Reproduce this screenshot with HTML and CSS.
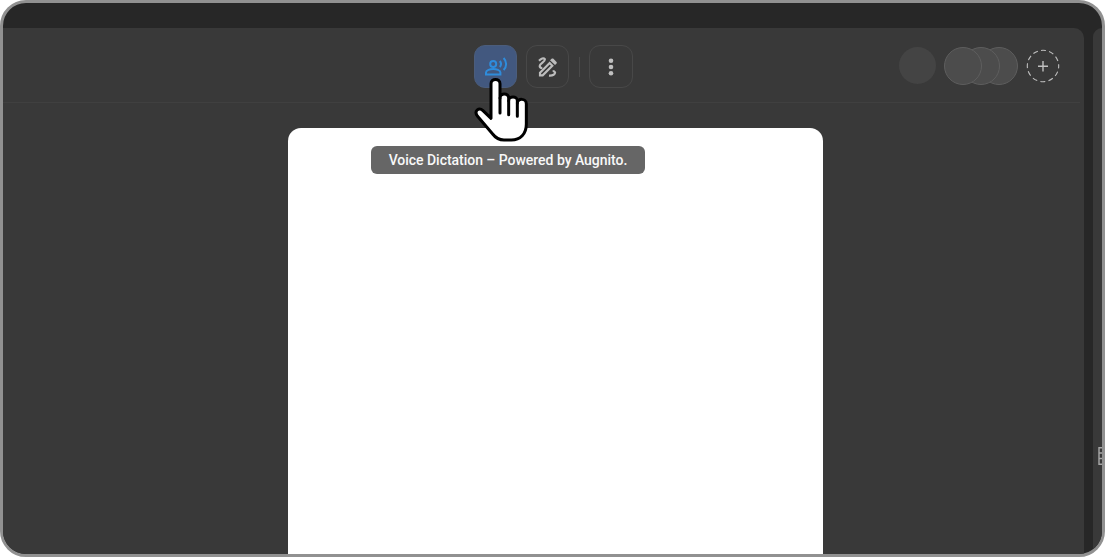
FILE: index.html
```html
<!DOCTYPE html>
<html lang="en">
<head>
<meta charset="utf-8">
<title>Voice Dictation</title>
<link rel="stylesheet" href="styles.css">
</head>
<body>
<div class="frame">
  <div class="workspace">
    <main class="panel">
      <header class="toolbar">
        <div class="tools">
          <button class="tool tool-active" aria-label="Voice dictation">
            <svg width="24" height="24" viewBox="0 0 24 24" fill="none" stroke="#2e8cdc" stroke-width="2">
              <circle cx="9.2" cy="9" r="3"/>
              <path d="M2 19.400v-2c0-2.300 4.200-3.400 7.200-3.400s7.200 1.100 7.200 3.400v2z"/>
              <path d="M15.800 6c1.500 1.800 1.500 4.200 0 6M19.600 3c3.400 3.500 3.400 8.500 0 12"/>
            </svg>
          </button>
          <button class="tool" aria-label="Draw">
            <svg width="20" height="20" viewBox="0 0 60 60" fill="none" stroke="#bcbcbc" stroke-width="6.500">
              <path d="M3 11C9 5 17 2 20 6c5 7-15 13-15 21 0 4 3 6 8 6"/>
              <path d="M6 47l29-29 8 8-29 29H6z"/>
              <path d="M33 56c12 1 19-5 18-10-1-3-4-4-7-4"/>
              <path d="M36 10l4-4c2-2 5-2 7 0l8 8c2 2 2 4 0 6l-4 4z" fill="#bcbcbc" stroke="none"/>
            </svg>
          </button>
          <span class="divider"></span>
          <button class="tool tool-more" aria-label="More">
            <svg width="6" height="18" viewBox="0 0 6 18" fill="#c0c0c0"><circle cx="3" cy="2.700" r="2.300"/><circle cx="3" cy="9" r="2.300"/><circle cx="3" cy="15.300" r="2.300"/></svg>
          </button>
        </div>
        <div class="people">
          <span class="avatar avatar-plain"></span>
          <div class="stack">
            <span class="avatar"></span><span class="avatar"></span><span class="avatar"></span>
          </div>
          <button class="add" aria-label="Add person">
            <svg width="34" height="34" viewBox="0 0 34 34" fill="none" stroke="#c0c0c0">
              <circle cx="17" cy="17" r="15.700" stroke-width="1.100" stroke-dasharray="5 3.220" stroke-dashoffset="2.500"/>
              <path d="M17 12v10.500M12 17.200h10" stroke-width="1.400"/>
            </svg>
          </button>
        </div>
      </header>
      <div class="canvas"><div class="page"></div></div>
    </main>
    <aside class="side">
      <svg width="4" height="18" viewBox="0 0 4 18" fill="none" stroke="#a8a8a8" stroke-width="1.400"><path d="M4 .8H1v16.400h3M1 6h3M1 11.500h3"/></svg>
    </aside>
  </div>
</div>
<div class="tooltip">Voice Dictation – Powered by Augnito.</div>
<svg class="cursor" width="80" height="80" viewBox="0 0 240 240" fill="#fff" stroke="#000" stroke-width="9" stroke-linejoin="round" stroke-linecap="round">
  <path d="M78 145V41c0-17 27-17 27 0v43c0-16 26-16 26 0v8c0-15 26-15 26 0v7c0-15 27-15 27 3v60c0 30-18 48-45 48h-22c-15 0-25-6-34-18L37 138c-11-16 5-27 17-16z"/>
  <path d="M105 84v45M131 92v42M157 99v40" fill="none"/>
</svg>
</body>
</html>
```
FILE: styles.css
```css
* { box-sizing: border-box; }
body {
  margin: 0;
  width: 1105px;
  height: 557px;
  overflow: hidden;
  position: relative;
  background: #fff;
  font-family: Roboto, sans-serif;
}
.frame {
  width: 1105px;
  height: 557px;
  padding-top: 25px;
  border: 3px solid #919191;
  border-radius: 26px;
  background: #272727;
  overflow: hidden;
}
.workspace { display: flex; gap: 9px; height: 100%; }
.panel {
  width: 1081px;
  flex: none;
  background: #393939;
  border-top-right-radius: 10px;
}
.toolbar {
  height: 75px;
  width: 1077px;
  display: flex;
  justify-content: space-between;
  padding: 17px 20px 0 471px;
  border-bottom: 1px solid #404040;
}
.tools { display: flex; align-items: flex-start; }
button { padding: 0; background: none; border: 0; }
.tool {
  display: flex;
  align-items: center;
  justify-content: center;
  width: 43px;
  height: 43px;
  border: 1px solid #484848;
  border-radius: 11px;
}
.tool-active { background: #42587f; border-color: #4b5d7c; margin-right: 9px; }
.divider { width: 1px; height: 20px; margin: 12px 9px 0 10px; background: #4a4a4a; }
.tool-more { width: 44px; }
.people { display: flex; align-items: flex-start; padding-top: 2px; }
.avatar {
  width: 38px;
  height: 38px;
  border-radius: 50%;
  background: #4c4c4c;
  border: 1px solid #5e5e5e;
}
.avatar-plain { background: #444; border: 0; width: 37px; height: 37px; margin-right: 8px; }
.stack { display: flex; }
.stack .avatar { position: relative; }
.stack .avatar + .avatar { margin-left: -20px; }
.stack .avatar:nth-child(1) { z-index: 3; }
.stack .avatar:nth-child(2) { z-index: 2; }
.add { display: flex; margin: 2px 0 0 8px; }
.canvas { display: flex; height: calc(100% - 75px); padding: 25px 0 0 285px; }
.page { width: 535px; background: #fff; border-radius: 13px 13px 0 0; }
.side { flex: 1; background: #393939; border-top-left-radius: 10px; padding-top: 419px; display: flex; justify-content: flex-end; }
.tooltip {
  position: absolute;
  left: 371px;
  top: 146px;
  width: 274px;
  height: 28px;
  border-radius: 6px;
  background: #666;
  color: #f8f8f8;
  font-size: 14px;
  font-weight: 500;
  letter-spacing: -0.03px;
  line-height: 28px;
  text-align: center;
  white-space: nowrap;
}
.cursor { position: absolute; left: 465px; top: 70px; }
```
